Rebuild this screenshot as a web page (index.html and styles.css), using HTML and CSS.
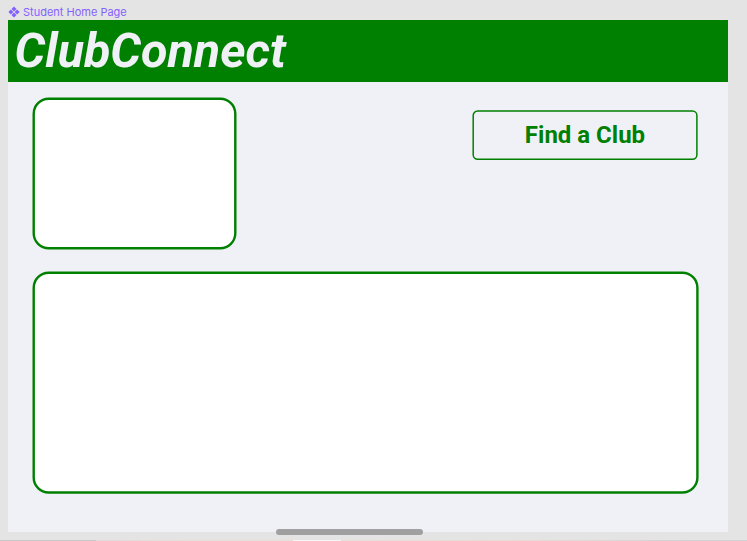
FILE: index.html
```html
<!DOCTYPE html>
<html lang="en">
<head>
<meta charset="utf-8">
<title>Student Home Page</title>
<link rel="stylesheet" href="styles.css">
</head>
<body>
<div class="frame-label">
  <svg class="component-icon" viewBox="0 0 12 12"><path d="M6 .4 8.5 2.9 6 5.4 3.5 2.9ZM6 6.6 8.5 9.1 6 11.6 3.5 9.1ZM2.9 3.5 5.4 6 2.9 8.5.4 6ZM9.1 3.5 11.6 6 9.1 8.5 6.6 6Z"/></svg>
  <span>Student Home Page</span>
</div>
<main class="frame">
  <header class="banner"><h1>ClubConnect</h1></header>
  <div class="content">
    <div class="top-row">
      <svg class="panel panel-small" viewBox="0 0 206 154"><rect x="1.7" y="1.7" width="201.6" height="149.6" rx="15"/></svg>
      <button class="find-club">
        <svg class="outline" viewBox="0 0 226 50"><rect x="1.2" y=".9" width="223.7" height="48.3" rx="4.5"/></svg>
        <span>Find a Club</span>
      </button>
    </div>
    <svg class="panel panel-large" viewBox="0 0 668 224"><rect x="1.7" y="1.7" width="663.7" height="219.8" rx="15"/></svg>
  </div>
</main>
<div class="scrollbar"></div>
<div class="window-edge"></div>
</body>
</html>
```
FILE: styles.css
```css
* { box-sizing: border-box; }
body {
  margin: 0;
  height: 541px;
  overflow: hidden;
  position: relative;
  background: #e4e4e4;
  font-family: Roboto, sans-serif;
}
.frame-label {
  display: flex;
  align-items: center;
  gap: 3px;
  height: 20px;
  padding: 4px 0 0 8px;
  color: #8461ff;
  font: 11px/16px Inter, sans-serif;
}
.component-icon { width: 12px; height: 12px; fill: #8461ff; }
.frame {
  width: 720px;
  height: 512px;
  margin-left: 8px;
  background: #f0f1f6;
}
.banner {
  height: 62px;
  padding-left: 6.5px;
  background: #008000;
}
h1 {
  margin: 0;
  color: #f0f1f6;
  font-size: 48.4px;
  font-weight: 700;
  font-style: italic;
  line-height: 62px;
}
.content { padding: 15px 29px 0 24px; }
.top-row {
  display: flex;
  justify-content: space-between;
  height: 174px;
}
.panel { display: block; fill: #fff; stroke: #008000; stroke-width: 2.4; }
.panel-small { width: 206px; height: 154px; }
.panel-large { width: 668px; height: 224px; }
.find-club {
  position: relative;
  width: 226px;
  height: 50px;
  margin: 13px 1px 0 0;
  padding: 0;
  border: 0;
  background: transparent;
  color: #008000;
  font: 700 24px/48px Roboto, sans-serif;
}
.outline {
  position: absolute;
  inset: 0;
  width: 100%;
  height: 100%;
  fill: none;
  stroke: #008000;
  stroke-width: 1.5;
}
.scrollbar {
  position: absolute;
  left: 276px;
  top: 529px;
  width: 147px;
  height: 6px;
  border-radius: 3px;
  background: #a0a0a0;
}
.window-edge {
  position: absolute;
  left: 0;
  bottom: 0;
  width: 100%;
  height: 1px;
  background: linear-gradient(90deg, #c8c8c8 96px, #e3d8db 96px, #e8ded8 180px, #e8ded8 293px, #f6f6f6 293px, #f6f6f6 341px, #e8ded8 341px, #ecd9d3 520px, #d2d2d5 690px);
}
```
